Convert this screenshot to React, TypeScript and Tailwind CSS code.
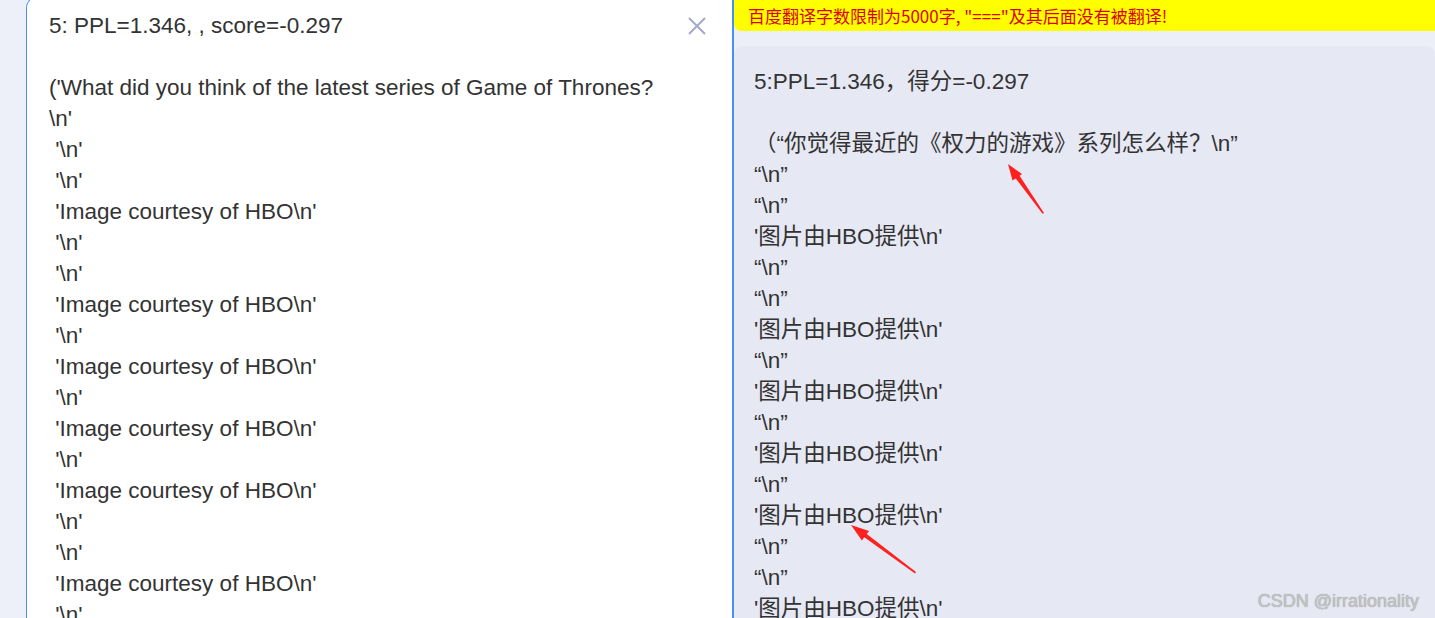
import React from "react";

const leftLines = [
  "5: PPL=1.346, , score=-0.297",
  "",
  "('What did you think of the latest series of Game of Thrones?",
  "\\n'",
  " '\\n'",
  " '\\n'",
  " 'Image courtesy of HBO\\n'",
  " '\\n'",
  " '\\n'",
  " 'Image courtesy of HBO\\n'",
  " '\\n'",
  " 'Image courtesy of HBO\\n'",
  " '\\n'",
  " 'Image courtesy of HBO\\n'",
  " '\\n'",
  " 'Image courtesy of HBO\\n'",
  " '\\n'",
  " '\\n'",
  " 'Image courtesy of HBO\\n'",
  " '\\n'",
];

const Q = "\u201c\\n\u201d";
const IMG = "'图片由HBO提供\\n'";
const rightLines = [
  "5:PPL=1.346，得分=-0.297",
  "",
  "（\u201c你觉得最近的《权力的游戏》系列怎么样？\\n\u201d",
  Q,
  Q,
  IMG,
  Q,
  Q,
  IMG,
  Q,
  IMG,
  Q,
  IMG,
  Q,
  IMG,
  Q,
  Q,
  IMG,
];

export default function App() {
  return (
    <div className="relative flex h-[618px] w-[1435px] overflow-hidden bg-[#eef0f9] font-['Liberation_Sans','Noto_Sans_CJK_SC',sans-serif]">
      <div className="w-[26px] shrink-0" />
      {/* Left panel */}
      <div className="relative -mt-[4px] h-[640px] w-[708px] shrink-0 rounded-tl-[12px] border border-r-2 border-[#4a8ff5] bg-white pl-[22px] pt-[13px]">
        <div className="whitespace-pre text-[22.5px] leading-[31px] text-[#333333]">
          {leftLines.map((l, i) => (
            <div key={i} className="h-[31px]">
              {l}
            </div>
          ))}
        </div>
        <button className="absolute right-[25px] top-[19px] h-[20px] w-[20px]">
          <svg viewBox="0 0 20 20" className="h-[20px] w-[20px]">
            <path d="M2 2 L18 18 M18 2 L2 18" stroke="#a4a8cc" strokeWidth="2" fill="none" />
          </svg>
        </button>
      </div>
      {/* Right column */}
      <div className="flex min-w-0 flex-1 flex-col">
        <div className="flex h-[31px] shrink-0 items-center rounded-bl-[7px] bg-[#ffff00] pl-[14px] pt-[1px] text-[17px] text-[#dd0000] font-['Noto_Sans_CJK_SC',sans-serif]">
          百度翻译字数限制为5000字, "==="及其后面没有被翻译!
        </div>
        <div className="h-[15px] shrink-0 bg-[#eceef8]" />
        <div className="relative flex-1 rounded-t-[8px] bg-[#e6e8f4] pl-[20px] pt-[20px]">
          <div className="whitespace-pre text-[22.5px] leading-[31px] text-[#333333]">
            {rightLines.map((l, i) => (
              <div key={i} className="h-[31px]">
                {l}
              </div>
            ))}
          </div>
          <div className="absolute bottom-[9px] right-[16px] text-[18px] text-[#c4c4c4] [text-shadow:0_0_1px_#8a8a8a]">
            CSDN @irrationality
          </div>
        </div>
      </div>
      {/* Annotation arrows */}
      <svg className="pointer-events-none absolute left-0 top-0" width="1435" height="618">
        <polygon
          points="1008,164 1022,174 1019.6,175.7 1044,213 1042.5,213.8 1015.8,178.5 1012.5,180.6"
          fill="#ff2020"
        />
        <polygon
          points="851,525 869.1,530.9 866.7,534.1 916,572 915,573.5 864.3,537.3 861.9,540.5"
          fill="#ff2020"
        />
      </svg>
    </div>
  );
}
